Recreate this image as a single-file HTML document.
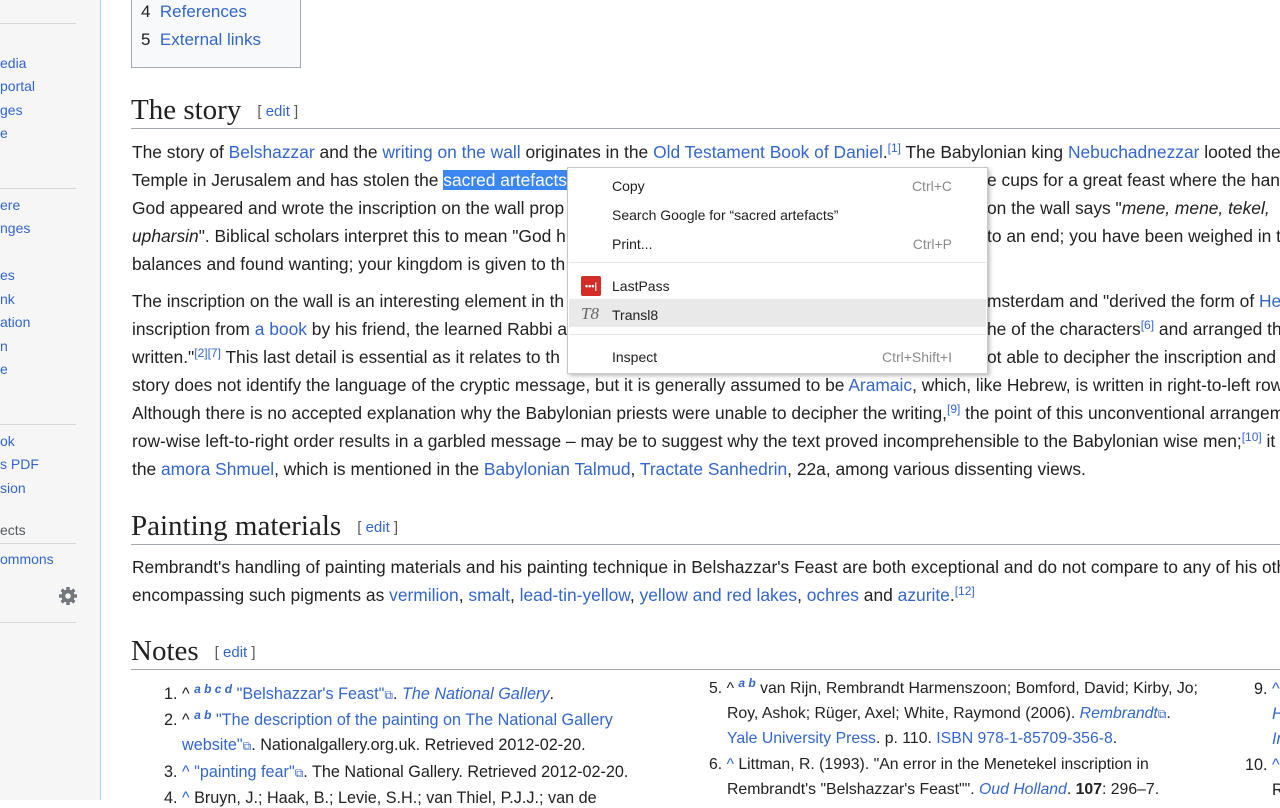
<!DOCTYPE html>
<html><head><meta charset="utf-8"><style>
*{margin:0;padding:0;box-sizing:border-box}
body{width:1280px;height:800px;overflow:hidden;background:#fff;font-family:"Liberation Sans",Arial,sans-serif;color:#202122;position:relative}
a,.a{color:#3366cc;text-decoration:none}
#side{position:absolute;left:0;top:0;width:101px;height:800px;background:#f6f6f6;border-right:1px solid #a7d7f9}
.s{position:absolute;left:0;font-size:14px;color:#3366cc;white-space:nowrap;line-height:18px}
.sep{position:absolute;left:0;width:76px;height:1px;background:#d8d8d8}
.l{position:absolute;left:132px;font-size:17.4px;line-height:22px;white-space:nowrap}
sup{font-size:12px;line-height:0;vertical-align:6px}
.h{position:absolute;left:131px;width:1160px;font-family:"Liberation Serif",Georgia,serif;font-size:29px;line-height:32px;border-bottom:1px solid #a2a9b1;white-space:nowrap}
.h span{font-family:"Liberation Sans",sans-serif;font-size:15px;color:#54595d;margin-left:16px;vertical-align:3px}
.n{position:absolute;font-size:16.2px;line-height:20px;white-space:nowrap}
#toc{position:absolute;left:131px;top:-5px;width:170px;height:73px;background:#f8f9fa;border:1px solid #a2a9b1;font-size:17px}
#menu{position:absolute;left:567px;top:167px;width:421px;height:207px;background:#fff;border:1px solid #c8c8c8;box-shadow:2px 2px 4px rgba(0,0,0,.25);font-size:14px;color:#202020}
.m{position:absolute;left:44px;line-height:18px}
.k2{position:absolute;right:35px;line-height:18px;color:#8a8a8a}
.ms{position:absolute;left:1px;right:1px;height:1px;background:#e6e6e6}
.sel{background:#3b86f0;color:#fff}
</style></head><body>
<div id="side">
<div class="sep" style="top:23px"></div>
<div class="s" style="top:54px">edia</div>
<div class="s" style="top:77px">portal</div>
<div class="s" style="top:101px">ges</div>
<div class="s" style="top:124px">e</div>
<div class="sep" style="top:188px"></div>
<div class="s" style="top:196px">ere</div>
<div class="s" style="top:219px">nges</div>
<div class="s" style="top:266px">es</div>
<div class="s" style="top:290px">nk</div>
<div class="s" style="top:313px">ation</div>
<div class="s" style="top:337px">n</div>
<div class="s" style="top:360px">e</div>
<div class="sep" style="top:424px"></div>
<div class="s" style="top:432px">ok</div>
<div class="s" style="top:455px">s PDF</div>
<div class="s" style="top:479px">sion</div>
<div class="s" style="top:521px;color:#54595d">ects</div>
<div class="sep" style="top:543px"></div>
<div class="s" style="top:550px">ommons</div>
<svg style="position:absolute;left:58px;top:586px" width="20" height="20" viewBox="0 0 20 20"><g fill="#72777d"><circle cx="10" cy="10" r="6.5"/><rect x="8.3" y="1" width="3.4" height="18"/><rect x="1" y="8.3" width="18" height="3.4"/><rect x="8.3" y="1" width="3.4" height="18" transform="rotate(45 10 10)"/><rect x="8.3" y="1" width="3.4" height="18" transform="rotate(-45 10 10)"/></g><circle cx="10" cy="10" r="2.8" fill="#f6f6f6"/></svg>
<div class="sep" style="top:622px"></div>
</div>

<div id="toc">
<div style="position:absolute;left:9px;top:6px">4&nbsp; <a>References</a></div>
<div style="position:absolute;left:9px;top:34px">5&nbsp; <a>External links</a></div>
</div>

<div class="h" style="top:94px">The story<span>[ <a>edit</a> ]</span></div>
<div class="l" style="top:141px">The story of <a>Belshazzar</a> and the <a>writing on the wall</a> originates in the <a>Old Testament Book of Daniel</a>.<sup class="a">[1]</sup> The Babylonian king <a>Nebuchadnezzar</a> looted the</div>
<div class="l" style="top:169px">Temple in Jerusalem and has stolen the <span class="sel">sacred artefacts</span></div>
<div class="l" style="top:169px;left:987px">e cups for a great feast where the hand</div>
<div class="l" style="top:197px">God appeared and wrote the inscription on the wall prop</div>
<div class="l" style="top:197px;left:987px">on the wall says "<i>mene, mene, tekel,</i></div>
<div class="l" style="top:225px"><i>upharsin</i>". Biblical scholars interpret this to mean "God h</div>
<div class="l" style="top:225px;left:987px">to an end; you have been weighed in th</div>
<div class="l" style="top:253px">balances and found wanting; your kingdom is given to th</div>
<div class="l" style="top:290px">The inscription on the wall is an interesting element in th</div>
<div class="l" style="top:290px;left:987px">msterdam and "derived the form of <a>He</a></div>
<div class="l" style="top:318px">inscription from <a>a book</a> by his friend, the learned Rabbi a</div>
<div class="l" style="top:318px;left:987px">he of the characters<sup class="a">[6]</sup> and arranged th</div>
<div class="l" style="top:346px">written."<sup class="a">[2][7]</sup> This last detail is essential as it relates to th</div>
<div class="l" style="top:346px;left:987px">ot able to decipher the inscription and b</div>
<div class="l" style="top:374px">story does not identify the language of the cryptic message, but it is generally assumed to be <a>Aramaic</a>, which, like Hebrew, is written in right-to-left rows</div>
<div class="l" style="top:402px">Although there is no accepted explanation why the Babylonian priests were unable to decipher the writing,<sup class="a">[9]</sup> the point of this unconventional arrangem</div>
<div class="l" style="top:430px">row-wise left-to-right order results in a garbled message – may be to suggest why the text proved incomprehensible to the Babylonian wise men;<sup class="a">[10]</sup> it</div>
<div class="l" style="top:458px">the <a>amora Shmuel</a>, which is mentioned in the <a>Babylonian Talmud</a>, <a>Tractate Sanhedrin</a>, 22a, among various dissenting views.</div>

<div class="h" style="top:510px">Painting materials<span>[ <a>edit</a> ]</span></div>
<div class="l" style="top:556px">Rembrandt's handling of painting materials and his painting technique in Belshazzar's Feast are both exceptional and do not compare to any of his oth</div>
<div class="l" style="top:584px">encompassing such pigments as <a>vermilion</a>, <a>smalt</a>, <a>lead-tin-yellow</a>, <a>yellow and red lakes</a>, <a>ochres</a> and <a>azurite</a>.<sup class="a">[12]</sup></div>

<div class="h" style="top:635px">Notes<span>[ <a>edit</a> ]</span></div>
<div class="n" style="top:684px;left:164px">1. ^ <sup class="a"><b><i>a b c d</i></b></sup> <a>"Belshazzar's Feast"</a><span class="a" style="font-size:12px">⧉</span>. <a><i>The National Gallery</i></a>.</div>
<div class="n" style="top:710px;left:164px">2. ^ <sup class="a"><b><i>a b</i></b></sup> <a>"The description of the painting on The National Gallery</a></div>
<div class="n" style="top:735px;left:182px"><a>website"</a><span class="a" style="font-size:12px">⧉</span>. Nationalgallery.org.uk. Retrieved 2012-02-20.</div>
<div class="n" style="top:762px;left:164px">3. <span class="a">^</span> <a>"painting fear"</a><span class="a" style="font-size:12px">⧉</span>. The National Gallery. Retrieved 2012-02-20.</div>
<div class="n" style="top:788px;left:164px">4. <span class="a">^</span> Bruyn, J.; Haak, B.; Levie, S.H.; van Thiel, P.J.J.; van de</div>

<div class="n" style="top:679px;left:709px;font-size:15.8px">5. ^ <sup class="a"><b><i>a b</i></b></sup> van Rijn, Rembrandt Harmenszoon; Bomford, David; Kirby, Jo;</div>
<div class="n" style="top:704px;left:727px;font-size:15.8px">Roy, Ashok; Rüger, Axel; White, Raymond (2006). <a><i>Rembrandt</i></a><span class="a" style="font-size:12px">⧉</span>.</div>
<div class="n" style="top:729px;left:727px;font-size:15.8px"><a>Yale University Press</a>. p. 110. <a>ISBN 978-1-85709-356-8</a>.</div>
<div class="n" style="top:755px;left:709px;font-size:15.8px">6. <span class="a">^</span> Littman, R. (1993). "An error in the Menetekel inscription in</div>
<div class="n" style="top:780px;left:727px;font-size:15.8px">Rembrandt's "Belshazzar's Feast"". <a><i>Oud Holland</i></a>. <b>107</b>: 296–7.</div>
<div class="n" style="top:679px;left:1254px">9. <span class="a">^</span></div>
<div class="n" style="top:704px;left:1272px"><a><i>H</i></a></div>
<div class="n" style="top:729px;left:1272px"><a><i>In</i></a></div>
<div class="n" style="top:755px;left:1245px">10. <span class="a">^</span></div>
<div class="n" style="top:780px;left:1272px">R</div>

<div id="menu">
<div class="m" style="top:9px">Copy</div><div class="k2" style="top:9px">Ctrl+C</div>
<div class="m" style="top:38px">Search Google for “sacred artefacts”</div>
<div class="m" style="top:67px">Print...</div><div class="k2" style="top:67px">Ctrl+P</div>
<div class="ms" style="top:94px"></div>
<div style="position:absolute;left:13px;top:108px;width:20px;height:20px;background:#d32d27;border-radius:2px;color:#fff;font-size:9px;line-height:20px;text-align:center;font-weight:bold">•••|</div>
<div class="m" style="top:109px">LastPass</div>
<div style="position:absolute;left:1px;right:1px;top:131px;height:28px;background:#e9e9e9"></div>
<div style="position:absolute;left:13px;top:137px;font-family:'Liberation Serif',serif;font-style:italic;font-size:17px;color:#666;line-height:18px">T8</div>
<div class="m" style="top:138px">Transl8</div>
<div class="ms" style="top:166px"></div>
<div class="m" style="top:180px">Inspect</div><div class="k2" style="top:180px">Ctrl+Shift+I</div>
</div>
</body></html>
